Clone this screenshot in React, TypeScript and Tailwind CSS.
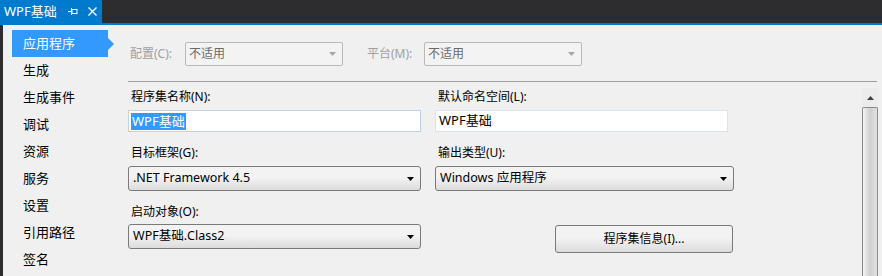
import React from 'react';

const FONT = "font-['Noto_Sans','Noto_Sans_CJK_SC',sans-serif]";

const navItems = ['应用程序', '生成', '生成事件', '调试', '资源', '服务', '设置', '引用路径', '签名'];

const Arrow = ({ color = '#000' }: { color?: string }) => (
  <svg width="7" height="4" viewBox="0 0 7 4" className="shrink-0">
    <path d="M0 0 H7 L3.5 4 Z" fill={color} />
  </svg>
);

const DisabledCombo = ({ text }: { text: string }) => (
  <div className="flex h-[24px] w-[158px] items-center justify-between rounded-[2px] border border-[#b9b9b9] bg-[#f3f3f3] pl-[3px] pr-[6px] text-[#6a6a6a]">
    <span>{text}</span>
    <Arrow color="#a6a6a6" />
  </div>
);

const Combo = ({ text, width }: { text: string; width: string }) => (
  <div
    className={`flex h-[25px] ${width} items-center justify-between rounded-[3px] border border-[#7a7a7a] bg-gradient-to-b from-[#f3f3f3] from-45% to-[#dcdcdc] pl-[4px] pr-[6px] text-[12.5px] text-black`}
  >
    <span>{text}</span>
    <Arrow />
  </div>
);

const Label = ({ children }: { children: React.ReactNode }) => (
  <div className="h-[16px] pl-[3px] leading-[16px] text-black">{children}</div>
);

export default function App() {
  return (
    <div className={`flex h-[276px] w-[882px] flex-col overflow-hidden bg-[#f0f0f0] text-[12px] ${FONT}`}>
      {/* tab strip */}
      <div className="flex h-[23px] shrink-0 bg-[#2d2d30]">
        <div className="flex w-[102px] items-center bg-[#007acc] pl-[4px] text-[13px] text-white">
          <span className="leading-none">WPF基础</span>
          <svg width="10" height="9" viewBox="0 0 10 9" className="ml-[11px]">
            <path d="M0 4.5 H3.5 M3.5 1 V8" stroke="#fff" strokeWidth="1" fill="none" />
            <rect x="4" y="2.5" width="5" height="4" stroke="#fff" strokeWidth="1" fill="none" />
          </svg>
          <svg width="9" height="9" viewBox="0 0 9 9" className="ml-[10px]">
            <path d="M0.5 0.5 L8.5 8.5 M8.5 0.5 L0.5 8.5" stroke="#fff" strokeWidth="1.4" />
          </svg>
        </div>
      </div>
      <div className="h-[2px] shrink-0 bg-[#007acc]" />

      <div className="flex flex-1">
        <div className="w-[3px] shrink-0 bg-[#2d2d30]" />

        {/* left navigation */}
        <div className="w-[125px] shrink-0 pt-[5px]">
          {navItems.map((item, i) => (
            <div key={item} className="flex h-[27px] items-center">
              {i === 0 ? (
                <>
                  <div className="ml-[9px] flex h-[27px] w-[96px] items-center bg-[#3399ff] pl-[11px] text-[13px] text-white">
                    {item}
                  </div>
                  <div className="h-0 w-0 border-y-[6px] border-l-[6px] border-y-transparent border-l-[#3399ff]" />
                </>
              ) : (
                <div className="pl-[20px] text-[13px] text-black">{item}</div>
              )}
            </div>
          ))}
        </div>

        {/* main */}
        <div className="flex flex-1 flex-col">
          <div className="flex items-center pt-[17px]">
            <span className="w-[57px] pl-[2px] text-[#a0a0a0]">配置(C):</span>
            <DisabledCombo text="不适用" />
            <span className="ml-[24px] w-[57px] text-[#a0a0a0]">平台(M):</span>
            <DisabledCombo text="不适用" />
          </div>

          <div className="mr-[5px] mt-[15px] h-px bg-[#a0a0a0]" />

          <div className="flex flex-1">
            <div className="flex flex-1 flex-col pt-[7px]">
              <div className="flex gap-[14px]">
                <div className="w-[293px]">
                  <Label>程序集名称(N):</Label>
                  <div className="mt-[5px] flex h-[22px] items-center border border-[#c3d1e0] bg-white pl-[2px]">
                    <span className="bg-[#3399ff] px-px text-[13px] leading-[17px] text-white">WPF基础</span>
                  </div>
                </div>
                <div className="w-[293px]">
                  <Label>默认命名空间(L):</Label>
                  <div className="mt-[5px] flex h-[22px] items-center border border-[#dbe3ec] bg-white pl-[3px] text-[13px]">
                    WPF基础
                  </div>
                </div>
              </div>

              <div className="mt-[13px] flex gap-[14px]">
                <div className="w-[293px]">
                  <Label>目标框架(G):</Label>
                  <div className="mt-[5px]">
                    <Combo text=".NET Framework 4.5" width="w-[293px]" />
                  </div>
                </div>
                <div className="w-[299px]">
                  <Label>输出类型(U):</Label>
                  <div className="mt-[5px]">
                    <Combo text="Windows 应用程序" width="w-[299px]" />
                  </div>
                </div>
              </div>

              <div className="mt-[13px] flex">
                <div className="w-[293px]">
                  <Label>启动对象(O):</Label>
                  <div className="mt-[4px]">
                    <Combo text="WPF基础.Class2" width="w-[293px]" />
                  </div>
                </div>
                <div className="ml-[134px] mt-[21px] flex h-[28px] w-[178px] items-center justify-center rounded-[3px] border border-[#7a7a7a] bg-gradient-to-b from-[#f3f3f3] from-45% to-[#dcdcdc] text-black">
                  程序集信息(I)...
                </div>
              </div>
            </div>

            {/* scrollbar */}
            <div className="mr-[4px] mt-[6px] flex w-[16px] flex-col">
              <div className="flex h-[19px] items-center justify-center bg-[#ececec]">
                <svg width="7" height="4" viewBox="0 0 7 4">
                  <path d="M0 4 H7 L3.5 0 Z" fill="#404040" />
                </svg>
              </div>
              <div className="flex-1 rounded-t-[2px] border border-b-0 border-[#8a8a8a] bg-gradient-to-r from-[#f4f4f4] via-[#cfcfcf] to-[#e2e2e2]" />
            </div>
          </div>
        </div>
      </div>
    </div>
  );
}
